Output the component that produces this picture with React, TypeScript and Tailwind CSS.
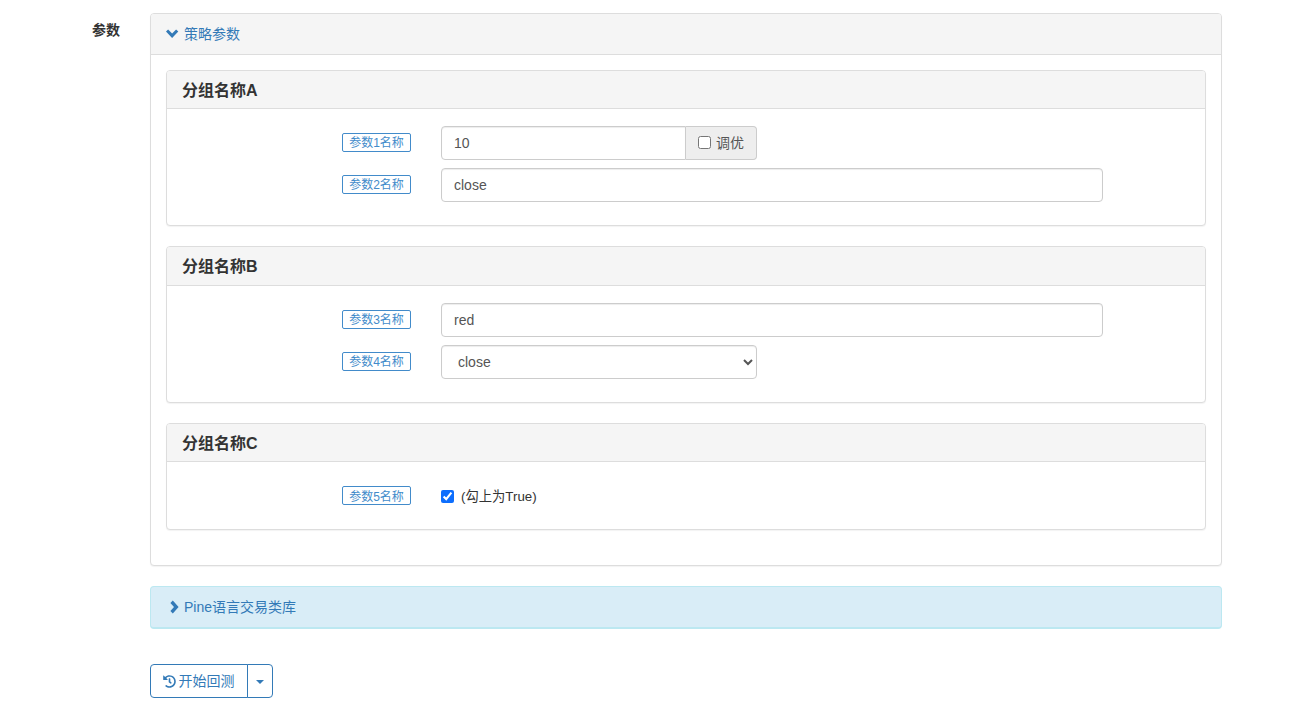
import React from "react";
import { FaHistory } from "react-icons/fa";

function Tag({ children }: { children: React.ReactNode }) {
  return (
    <span className="mb-[2px] flex h-[19px] w-[69px] shrink-0 items-center justify-center rounded-[2px] border border-[#428bca] pt-[2px] text-[12px] leading-none text-[#428bca]">
      {children}
    </span>
  );
}

function Row({ label, children }: { label: string; children: React.ReactNode }) {
  return (
    <div className="flex items-center pl-[175px]">
      <Tag>{label}</Tag>
      <div className="ml-[30px] flex items-center">{children}</div>
    </div>
  );
}

const inputCls =
  "h-[34px] rounded-[4px] border border-[#ccc] bg-white px-3 text-[14px] text-[#555] outline-none shadow-[inset_0_1px_1px_rgba(0,0,0,0.075)]";

function Group({ title, headH, bodyCls, children }: { title: string; headH: string; bodyCls: string; children: React.ReactNode }) {
  return (
    <section className="rounded-[4px] border border-[#ddd] bg-white shadow-[0_1px_1px_rgba(0,0,0,0.05)]">
      <h3 className={"flex items-center rounded-t-[3px] border-b border-[#ddd] bg-[#f5f5f5] pl-[15px] pt-[2px] text-[16px] font-bold text-[#333] " + headH}>
        {title}
      </h3>
      <div className={bodyCls}>{children}</div>
    </section>
  );
}

function ChevronDown() {
  return (
    <svg width="13" height="13" viewBox="0 0 13 13" className="mr-[5px] shrink-0">
      <path d="M0 3.6 2.1 1.4 6.1 5.4 10.1 1.4 12.3 3.6 6.1 10Z" fill="#337ab7" />
    </svg>
  );
}

function ChevronRight() {
  return (
    <svg width="14" height="14" viewBox="0 0 14 14" className="mr-[2px] shrink-0">
      <path d="M2.4 3 4.8 .6 10.6 7 4.8 13.4 2.4 11 6 7Z" fill="#337ab7" />
    </svg>
  );
}

export default function App() {
  return (
    <div
      className="flex h-[711px] w-[1290px] overflow-hidden bg-white pl-[92px] pt-[13px] text-[14px] text-[#333]"
      style={{ fontFamily: '"Liberation Sans", "Noto Sans CJK SC", sans-serif' }}
    >
      <div className="w-[58px] shrink-0 pt-[8px] text-[14px] font-bold leading-[18px]">参数</div>
      <div className="w-[1072px] shrink-0">
        <div className="h-[553px] rounded-[4px] border border-[#ddd] bg-white shadow-[0_1px_1px_rgba(0,0,0,0.05)]">
          <div className="flex h-[41px] items-center rounded-t-[3px] border-b border-[#ddd] bg-[#f5f5f5] pl-[15px] text-[#337ab7]">
            <ChevronDown />
            <span>策略参数</span>
          </div>
          <div className="flex flex-col gap-[20px] px-[15px] pt-[15px]">
            <Group title="分组名称A" headH="h-[38px]" bodyCls="flex h-[116px] flex-col gap-[8px] pt-[17px]">
              <Row label="参数1名称">
                <input readOnly value="10" className={inputCls + " w-[245px] rounded-r-none"} />
                <label className="flex h-[34px] w-[71px] items-center justify-center rounded-r-[4px] border border-l-0 border-[#ccc] bg-[#eee] text-[#555]">
                  <input type="checkbox" className="mb-[2px] mr-[5px] h-[13px] w-[13px]" />
                  调优
                </label>
              </Row>
              <Row label="参数2名称">
                <input readOnly value="close" className={inputCls + " w-[662px]"} />
              </Row>
            </Group>
            <Group title="分组名称B" headH="h-[39px]" bodyCls="flex h-[116px] flex-col gap-[8px] pt-[17px]">
              <Row label="参数3名称">
                <input readOnly value="red" className={inputCls + " w-[662px]"} />
              </Row>
              <Row label="参数4名称">
                <select defaultValue="close" className={inputCls + " w-[316px] appearance-auto"}>
                  <option>close</option>
                </select>
              </Row>
            </Group>
            <Group title="分组名称C" headH="h-[38px]" bodyCls="flex h-[67px] flex-col pt-[24px]">
              <Row label="参数5名称">
                <label className="flex items-center text-[13.3px] text-[#333]">
                  <input type="checkbox" defaultChecked className="mr-[7px] h-[13px] w-[13px] accent-[#0d6efd]" />
                  (勾上为True)
                </label>
              </Row>
            </Group>
          </div>
        </div>
        <div className="mt-[20px] flex h-[43px] items-center rounded-[4px] border border-b-2 border-[#bce8f1] bg-[#d9edf7] pl-[17px] text-[#337ab7]">
          <ChevronRight />
          <span>Pine语言交易类库</span>
        </div>
        <div className="mt-[35px] flex h-[34px]">
          <button className="flex w-[98px] items-center justify-center rounded-l-[4px] border border-[#337ab7] bg-white pr-[1px] text-[#337ab7]">
            <FaHistory className="mr-[3px] h-[13px] w-[13px] shrink-0" />
            开始回测
          </button>
          <button className="-ml-px flex w-[26px] items-center justify-center rounded-r-[4px] border border-[#337ab7] bg-white">
            <span className="mt-[2px] h-0 w-0 border-x-[4px] border-t-[4px] border-x-transparent border-t-[#337ab7]" />
          </button>
        </div>
      </div>
    </div>
  );
}
